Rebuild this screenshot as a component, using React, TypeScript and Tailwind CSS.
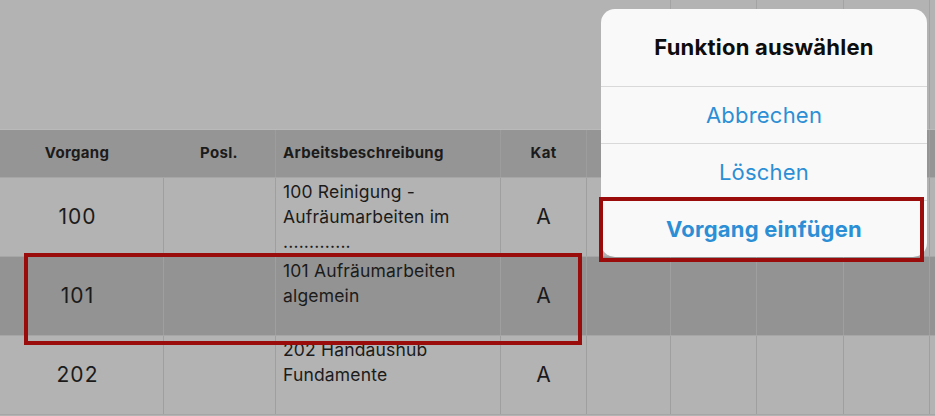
import React from 'react';

type Row = {
  nr: string;
  lines: string[];
  kat: string;
  selected?: boolean;
};

const rows: Row[] = [
  { nr: '100', lines: ['100 Reinigung -', 'Aufräumarbeiten im', '.............'], kat: 'A' },
  { nr: '101', lines: ['101 Aufräumarbeiten', 'algemein'], kat: 'A', selected: true },
  { nr: '202', lines: ['202 Handaushub', 'Fundamente'], kat: 'A' },
];

const cols = 'grid grid-cols-[163px_112px_225px_86px_84px_86px_87px_86px_1fr]';
const emptyCols = [0, 1, 2, 3, 4];

const App: React.FC = () => {
  return (
    <div
      className="relative w-[935px] h-[416px] overflow-hidden bg-[#b3b3b3] text-[#1b1b1b]"
      style={{ fontFamily: 'Inter, "Noto Sans", sans-serif' }}
    >
      {/* top area, only the right columns show grid lines */}
      <div className="flex h-[130px] border-b border-[#bababa]">
        <div className="w-[670px]" />
        <div className="w-[86px] border-l border-[#a3a3a3]" />
        <div className="w-[87px] border-l border-[#a3a3a3]" />
        <div className="w-[86px] border-l border-[#a3a3a3]" />
        <div className="flex-1 border-l border-[#a3a3a3]" />
      </div>

      {/* header */}
      <div className={`${cols} h-[48px] bg-[#959595] border-b border-[#a6a6a6] text-[15px] font-bold tracking-[0.02em]`}>
        <div className="flex items-center justify-center pr-[9px]">Vorgang</div>
        <div className="flex items-center justify-center">Posl.</div>
        <div className="flex items-center pl-[7px] border-l border-[#9d9d9d]">Arbeitsbeschreibung</div>
        <div className="flex items-center justify-center border-l border-[#9d9d9d]">Kat</div>
        {emptyCols.map((i) => (
          <div key={i} className="border-l border-[#9d9d9d]" />
        ))}
      </div>

      {/* rows */}
      {rows.map((row) => (
        <div
          key={row.nr}
          className={`${cols} h-[79px] border-b border-[#a6a6a6] ${row.selected ? 'bg-[#939393]' : ''}`}
        >
          <div className="flex items-center justify-center pr-[8px] text-[21px] tracking-[0.05em]">{row.nr}</div>
          <div className="border-l border-[#9f9f9f]" />
          <div className="border-l border-[#9f9f9f] pl-[7px] pt-px text-[17.5px] tracking-[0.01em] leading-[25px]">
            {row.lines.map((l, i) => (
              <div key={i} className="whitespace-nowrap">
                {l}
              </div>
            ))}
          </div>
          <div className="flex items-center justify-center border-l border-[#9f9f9f] text-[21px]">{row.kat}</div>
          {emptyCols.map((i) => (
            <div key={i} className="border-l border-[#9f9f9f]" />
          ))}
        </div>
      ))}

      {/* action sheet */}
      <div className="absolute left-[601px] top-[9px] w-[326px] rounded-[14px] bg-[#f9f9f9] text-center overflow-hidden">
        <div className="h-[77px] flex items-center justify-center text-[22px] font-bold tracking-[0.01em] text-[#0d0d0d]">
          Funktion auswählen
        </div>
        <div className="h-[57px] flex items-center justify-center border-t border-[#d9d9d9] text-[22px] tracking-[0.01em] text-[#2c8fd5]">
          Abbrechen
        </div>
        <div className="h-[57px] flex items-center justify-center border-t border-[#d9d9d9] text-[22px] tracking-[0.01em] text-[#2c8fd5]">
          Löschen
        </div>
        <div className="h-[57px] flex items-center justify-center border-t border-[#d9d9d9] text-[22px] font-bold tracking-[0.01em] text-[#2c8fd5]">
          Vorgang einfügen
        </div>
      </div>

      {/* annotation frames */}
      <div className="absolute left-[599px] top-[197px] w-[325px] h-[65px] border-4 border-[#9a0c0c]" />
      <div className="absolute left-[24px] top-[253px] w-[558px] h-[92px] border-4 border-[#9a0c0c]" />
    </div>
  );
};

export default App;
